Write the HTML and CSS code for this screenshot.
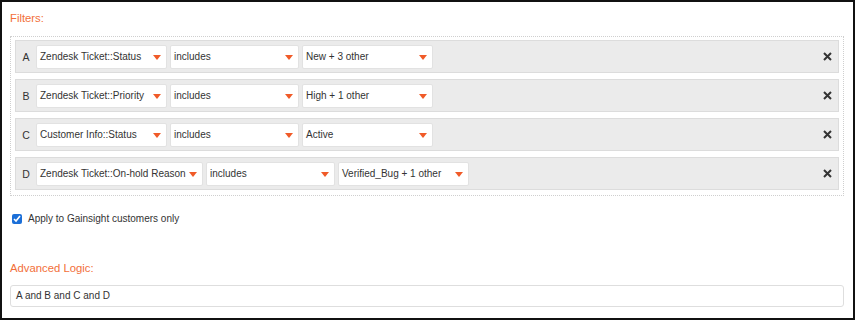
FILE: index.html
```html
<!DOCTYPE html>
<html lang="en">
<head>
    <meta charset="UTF-8">
    <meta name="viewport" content="width=device-width, initial-scale=1.0">
    <link rel="stylesheet" href="styles.css">
    <title>Filters</title>
</head>
<body>
<div class="frame">
    <div class="label">Filters:</div>

    <div class="filters">
        <div class="row">
            <span class="letter">A</span>
            <div class="sel w1">Zendesk Ticket::Status<i class="arrow"></i></div>
            <div class="sel w2">includes<i class="arrow"></i></div>
            <div class="sel w3">New + 3 other<i class="arrow"></i></div>
            <span class="close"><svg width="9" height="9" viewBox="0 0 9 9"><path d="M1 1L8 8M8 1L1 8" stroke="#333" stroke-width="2"/></svg></span>
        </div>
        <div class="row">
            <span class="letter">B</span>
            <div class="sel w1">Zendesk Ticket::Priority<i class="arrow"></i></div>
            <div class="sel w2">includes<i class="arrow"></i></div>
            <div class="sel w3">High + 1 other<i class="arrow"></i></div>
            <span class="close"><svg width="9" height="9" viewBox="0 0 9 9"><path d="M1 1L8 8M8 1L1 8" stroke="#333" stroke-width="2"/></svg></span>
        </div>
        <div class="row">
            <span class="letter">C</span>
            <div class="sel w1">Customer Info::Status<i class="arrow"></i></div>
            <div class="sel w2">includes<i class="arrow"></i></div>
            <div class="sel w3">Active<i class="arrow"></i></div>
            <span class="close"><svg width="9" height="9" viewBox="0 0 9 9"><path d="M1 1L8 8M8 1L1 8" stroke="#333" stroke-width="2"/></svg></span>
        </div>
        <div class="row">
            <span class="letter">D</span>
            <div class="sel w1 wide">Zendesk Ticket::On-hold Reason<i class="arrow"></i></div>
            <div class="sel w2">includes<i class="arrow"></i></div>
            <div class="sel w3">Verified_Bug + 1 other<i class="arrow"></i></div>
            <span class="close"><svg width="9" height="9" viewBox="0 0 9 9"><path d="M1 1L8 8M8 1L1 8" stroke="#333" stroke-width="2"/></svg></span>
        </div>
    </div>

    <label class="check"><input type="checkbox" checked> Apply to Gainsight customers only</label>

    <div class="label adv">Advanced Logic:</div>
    <div class="logic">A and B and C and D</div>
</div>
</body>
</html>
```

FILE: styles.css
```css
html,body{margin:0;padding:0;background:#fff;}
body{font-family:"Liberation Sans",Arial,sans-serif;font-size:10px;color:#333;}
.frame{width:855px;height:320px;box-sizing:border-box;border:2px solid #111;padding:9px 9px 0 8px;}
.label{color:#f26f3a;font-size:11.3px;line-height:14px;height:14px;}
.filters{margin-top:11px;border:1px dotted #cfcfcf;padding:3px 4px 5px 4px;}
.row{display:flex;align-items:center;height:31px;border:1px solid #dcdcdc;background:#ebebeb;margin-bottom:6px;padding:0 4px 0 0;}
.row:last-child{margin-bottom:0;}
.letter{width:20px;text-align:center;font-size:10.5px;color:#333;}
.sel{position:relative;box-sizing:border-box;height:24px;line-height:22px;background:#fff;border:1px solid #e2e2e2;border-radius:2px;padding:0 3px;margin-right:3px;white-space:nowrap;}
.w1{width:131px;}
.w1.wide{width:167px;}
.w2{width:129px;}
.w3{width:131px;}
.arrow{position:absolute;right:5px;top:9px;width:0;height:0;border-left:4px solid transparent;border-right:4px solid transparent;border-top:5px solid #f05a28;}
.close{margin-left:auto;margin-right:2px;display:flex;}
.check{display:flex;align-items:center;margin-top:16px;height:14px;line-height:14px;}
.check input{margin:0 6px 0 2px;width:10px;height:10px;accent-color:#1b6fd8;}
.adv{margin-top:35px;}
.logic{margin-top:10px;height:22px;box-sizing:border-box;border:1px solid #dedede;border-radius:3px;line-height:20px;padding:0 5px;width:834px;}
```
